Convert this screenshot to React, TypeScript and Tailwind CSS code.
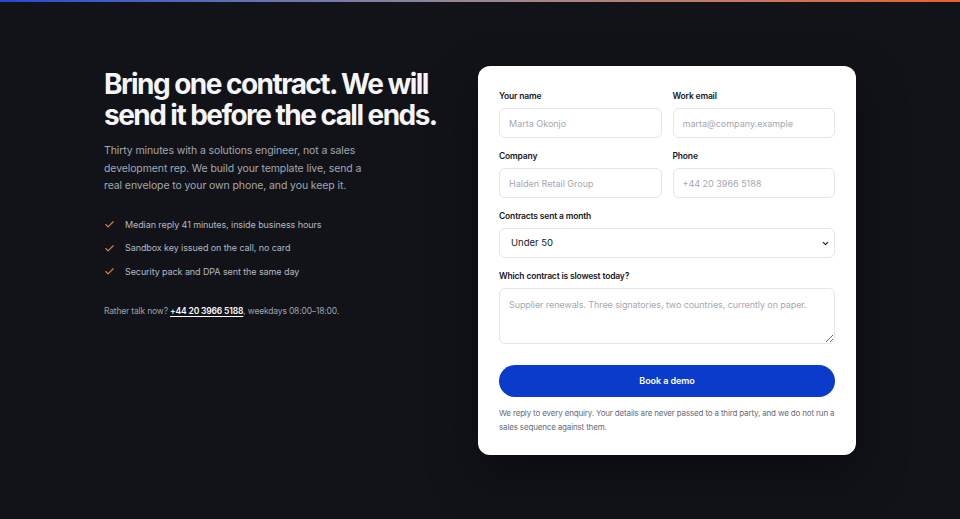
import { Check, ChevronDown } from 'lucide-react';

const perks = [
  'Median reply 41 minutes, inside business hours',
  'Sandbox key issued on the call, no card',
  'Security pack and DPA sent the same day',
];

const Field = ({ label, placeholder }: { label: string; placeholder: string }) => (
  <label className="flex flex-col">
    <span className="mb-[5px] text-[8.5px] leading-[14px] font-semibold tracking-[-0.02em] text-[#15171c]">
      {label}
    </span>
    <input
      placeholder={placeholder}
      className="h-[30px] rounded-[6px] border border-[#e3e5ea] bg-white px-[9px] text-[9px] text-[#15171c] outline-none placeholder:text-[#a4a8b2]"
    />
  </label>
);

const App = () => {
  return (
    <div className="min-h-screen bg-[#111319] font-['Inter',sans-serif]">
      <div className="h-[2px] bg-linear-to-r from-[#2747d6] via-[#9a8890] to-[#ea5f28]" />
      <main className="mx-auto flex max-w-[752px] items-start justify-between py-[64px]">
        <div className="w-[330px] pt-[3px]">
          <h1 className="text-[28px] leading-[31px] font-bold tracking-[-0.055em] whitespace-nowrap text-[#f5f5f7]">
            Bring one contract. We will
            <br />
            send it before the call ends.
          </h1>
          <p className="mt-[11px] text-[10.5px] leading-[17.5px] tracking-[-0.01em] whitespace-nowrap text-[#a3a7b0]">
            Thirty minutes with a solutions engineer, not a sales
            <br />
            development rep. We build your template live, send a
            <br />
            real envelope to your own phone, and you keep it.
          </p>
          <ul className="mt-[22px] flex flex-col gap-[7.5px]">
            {perks.map((p) => (
              <li
                key={p}
                className="flex items-center gap-[10px] text-[9px] leading-[16px] tracking-[-0.01em] text-[#b4b8c0]"
              >
                <Check className="h-[11px] w-[11px] text-[#d9843e]" strokeWidth={2.5} />
                {p}
              </li>
            ))}
          </ul>
          <p className="mt-[23px] text-[8.5px] leading-[16px] tracking-[-0.02em] text-[#9ea2ab]">
            Rather talk now?{' '}
            <a className="font-semibold text-white underline underline-offset-2">+44 20 3966 5188</a>
            , weekdays 08:00–18:00.
          </p>
        </div>

        <form className="w-[378px] rounded-[12px] bg-white px-[21px] pt-[23px] pb-[21px] shadow-[0_20px_50px_rgba(0,0,0,0.4)]">
          <div className="grid grid-cols-2 gap-x-[11px] gap-y-[11px]">
            <Field label="Your name" placeholder="Marta Okonjo" />
            <Field label="Work email" placeholder="marta@company.example" />
            <Field label="Company" placeholder="Halden Retail Group" />
            <Field label="Phone" placeholder="+44 20 3966 5188" />
          </div>
          <label className="mt-[11px] flex flex-col">
            <span className="mb-[5px] text-[8.5px] leading-[14px] font-semibold tracking-[-0.02em] text-[#15171c]">
              Contracts sent a month
            </span>
            <div className="relative">
              <select className="h-[30px] w-full appearance-none rounded-[6px] border border-[#e3e5ea] bg-white px-[11px] text-[9.5px] text-[#15171c] outline-none">
                <option>Under 50</option>
                <option>50 to 500</option>
                <option>Over 500</option>
              </select>
              <ChevronDown
                className="pointer-events-none absolute top-[11px] right-[5px] h-[9px] w-[9px] text-[#15171c]"
                strokeWidth={3}
              />
            </div>
          </label>
          <label className="mt-[11px] flex flex-col">
            <span className="mb-[5px] text-[8.5px] leading-[14px] font-semibold tracking-[-0.02em] text-[#15171c]">
              Which contract is slowest today?
            </span>
            <textarea
              placeholder="Supplier renewals. Three signatories, two countries, currently on paper."
              className="h-[56px] rounded-[6px] border border-[#e3e5ea] bg-white px-[9px] py-[9px] text-[9px] leading-[14px] tracking-[-0.01em] text-[#15171c] outline-none placeholder:text-[#a4a8b2]"
            />
          </label>
          <button
            type="button"
            className="mt-[21px] h-[32px] w-full rounded-full bg-[#0a3bcb] text-[9px] font-semibold tracking-[-0.01em] text-white"
          >
            Book a demo
          </button>
          <p className="mt-[9px] text-[8px] leading-[14px] tracking-[-0.02em] text-[#676b76]">
            We reply to every enquiry. Your details are never passed to a third
            party, and we do not run a sales sequence against them.
          </p>
        </form>
      </main>
    </div>
  );
};

export default App;
